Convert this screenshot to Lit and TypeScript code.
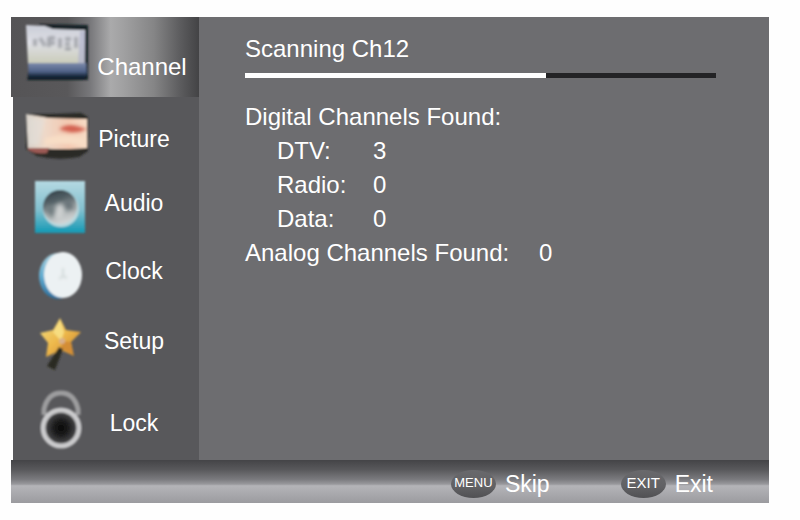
import { LitElement, html, css, svg } from "lit";
import { customElement, state } from "lit/decorators.js";
import { classMap } from "lit/directives/class-map.js";

const channelIcon = svg`
  <svg class="icon" width="78" height="80" viewBox="0 0 78 80" aria-hidden="true">
    <defs>
      <linearGradient id="ch-screen" x1="0" y1="0" x2="0" y2="1">
        <stop offset="0" stop-color="#c9ccd6" />
        <stop offset=".45" stop-color="#dfe0e6" />
        <stop offset="1" stop-color="#c9cbb8" />
      </linearGradient>
      <linearGradient id="ch-base" x1="0" y1="0" x2="0" y2="1">
        <stop offset="0" stop-color="#7d8bab" />
        <stop offset=".5" stop-color="#4f6288" />
        <stop offset=".75" stop-color="#1c2c40" />
        <stop offset="1" stop-color="#0a151d" />
      </linearGradient>
      <filter id="ch-soft"><feGaussianBlur stdDeviation="0.9" /></filter>
      <filter id="ch-blur"><feGaussianBlur stdDeviation="1.2" /></filter>
    </defs>
    <g filter="url(#ch-soft)">
      <path d="M28 7L77 8V63H16z" fill="#192027" />
      <path d="M15 8L34 9L42 12L74 13L73 47H17z" fill="url(#ch-screen)" />
      <path d="M17 46H75L76 58L72 63H18z" fill="url(#ch-base)" />
      <path d="M69 14H74V46H67z" fill="#b4b6cc" opacity=".8" />
      <path d="M24 22V29M29 21L34 29M38 20V30M38 21H44M44 26H38M49 21V31M54 22H60M54 27H59M54 32H60M65 20V31"
        stroke="#8f9298" stroke-width="4" fill="none" opacity=".7" filter="url(#ch-blur)" />
    </g>
  </svg>`;

const pictureIcon = svg`
  <svg class="icon" width="78" height="72" viewBox="0 0 78 72" aria-hidden="true">
    <defs>
      <linearGradient id="pi-face" x1="0" y1="0" x2="1" y2="0">
        <stop offset="0" stop-color="#d3cdc6" />
        <stop offset=".3" stop-color="#eed9c9" />
        <stop offset=".7" stop-color="#f3c8b0" />
        <stop offset="1" stop-color="#f8dcc6" />
      </linearGradient>
      <filter id="pi-soft"><feGaussianBlur stdDeviation="0.9" /></filter>
      <filter id="pi-blur"><feGaussianBlur stdDeviation="1.5" /></filter>
    </defs>
    <g filter="url(#pi-soft)">
      <path d="M15 17L40 17L70 16L77 20V54L68 60Q46 64 26 59L15 52z" fill="#292a25" />
      <path d="M15 17L38 21L76 22V51Q56 53 17 51z" fill="url(#pi-face)" />
      <path d="M48 32Q56 26 66 29L76 32Q66 37 58 35Q52 34 48 32z" fill="#d3604f" filter="url(#pi-blur)" />
      <path d="M34 42Q52 34 75 42V49Q54 45 34 48z" fill="#f8dec6" filter="url(#pi-blur)" />
      <path d="M17 51H38L36 56Q26 58 17 53z" fill="#9c5a54" />
      <path d="M17 20L34 22L28 48H18z" fill="#e4e1dc" opacity=".6" filter="url(#pi-blur)" />
    </g>
  </svg>`;

const audioIcon = svg`
  <svg class="icon" width="78" height="64" viewBox="0 0 78 64" aria-hidden="true">
    <defs>
      <linearGradient id="au-box" x1="0" y1="0" x2="0" y2="1">
        <stop offset="0" stop-color="#b5d9e2" />
        <stop offset=".55" stop-color="#83c0cf" />
        <stop offset="1" stop-color="#1399b4" />
      </linearGradient>
      <linearGradient id="au-cone" x1=".3" y1="0" x2=".6" y2="1">
        <stop offset="0" stop-color="#34434b" />
        <stop offset=".35" stop-color="#59656a" />
        <stop offset=".6" stop-color="#a9afb0" />
        <stop offset="1" stop-color="#d5d8d8" />
      </linearGradient>
      <filter id="au-soft"><feGaussianBlur stdDeviation="0.8" /></filter>
      <filter id="au-blur" x="-50%" y="-50%" width="200%" height="200%"><feGaussianBlur stdDeviation="2" /></filter>
    </defs>
    <g filter="url(#au-soft)">
      <rect x="24" y="12" width="50" height="52" fill="url(#au-box)" />
      <circle cx="50" cy="40" r="18" fill="#b9d8de" />
      <circle cx="49" cy="38" r="17" fill="url(#au-cone)" />
      <path d="M34 36L48 38L42 49Q35 45 34 36z" fill="#707b7f" filter="url(#au-blur)" />
      <path d="M49 36L59 28L64 40L54 42z" fill="#6a7579" filter="url(#au-blur)" />
      <path d="M45 37L50 34L54 40L50 50L44 50z" fill="#cfd2d2" filter="url(#au-blur)" />
    </g>
  </svg>`;

const clockIcon = svg`
  <svg class="icon" width="78" height="68" viewBox="0 0 78 68" aria-hidden="true">
    <defs>
      <linearGradient id="cl-side" x1="0" y1="0" x2="0" y2="1">
        <stop offset="0" stop-color="#a9cfdc" />
        <stop offset=".5" stop-color="#62acd0" />
        <stop offset="1" stop-color="#2b6f9f" />
      </linearGradient>
      <filter id="cl-soft"><feGaussianBlur stdDeviation="0.9" /></filter>
      <filter id="cl-blur"><feGaussianBlur stdDeviation="1" /></filter>
    </defs>
    <g filter="url(#cl-soft)">
      <ellipse cx="47" cy="43" rx="19" ry="23" fill="url(#cl-side)" />
      <ellipse cx="52" cy="42" rx="19" ry="23" fill="#ecf1f3" />
      <path d="M52 35V43L48 46M52 43L56 45" stroke="#d3dada" stroke-width="2" fill="none" filter="url(#cl-blur)" />
    </g>
  </svg>`;

const setupIcon = svg`
  <svg class="icon" width="78" height="70" viewBox="0 0 78 70" aria-hidden="true">
    <defs>
      <linearGradient id="st-star" x1="0" y1="0" x2="1" y2="1">
        <stop offset="0" stop-color="#f3df83" />
        <stop offset=".5" stop-color="#edb84b" />
        <stop offset="1" stop-color="#c77f2b" />
      </linearGradient>
      <filter id="st-soft"><feGaussianBlur stdDeviation="0.9" /></filter>
    </defs>
    <g filter="url(#st-soft)">
      <path d="M49 17L55 29L70 31L60 41L63 55L50 49L35 56L37 42L29 32L42 29z" fill="url(#st-star)" />
      <path d="M49 19L53 31L50 40L42 31z" fill="#f7dd80" />
      <path d="M50 40L60 41L62 53L51 48z" fill="#d38d36" />
      <circle cx="51" cy="40" r="3" fill="#d9b089" />
      <path d="M48 46L52 48L44 69L36 65z" fill="#292a24" />
    </g>
  </svg>`;

const lockIcon = svg`
  <svg class="icon" width="78" height="82" viewBox="0 0 78 82" aria-hidden="true">
    <defs>
      <radialGradient id="lo-dial">
        <stop offset="0" stop-color="#080808" />
        <stop offset=".4" stop-color="#1c1c1d" />
        <stop offset="1" stop-color="#555557" />
      </radialGradient>
      <filter id="lo-soft"><feGaussianBlur stdDeviation="0.9" /></filter>
    </defs>
    <g filter="url(#lo-soft)">
      <path d="M33 44V38Q37 22 50 22Q63 22 67 38V44" fill="none" stroke="#9c9c9e" stroke-width="5" />
      <circle cx="50" cy="57" r="18" fill="url(#lo-dial)" stroke="#cacacc" stroke-width="5" />
    </g>
  </svg>`;

const MENU = [
  { id: "channel", label: "Channel", icon: channelIcon },
  { id: "picture", label: "Picture", icon: pictureIcon },
  { id: "audio", label: "Audio", icon: audioIcon },
  { id: "clock", label: "Clock", icon: clockIcon },
  { id: "setup", label: "Setup", icon: setupIcon },
  { id: "lock", label: "Lock", icon: lockIcon },
];

@customElement("app-root")
export class AppRoot extends LitElement {
  @state() private active = "channel";
  @state() private progress = 64;

  static styles = css`
    :host {
      display: block;
      box-sizing: border-box;
      min-height: 100vh;
      padding: 17px 31px 17px 11px;
      background: #fefefe;
      color: #fff;
      font-family: "Liberation Sans", Arial, sans-serif;
      font-size: 24px;
      line-height: 34px;
    }
    button {
      border: 0;
      margin: 0;
      padding: 0;
      background: none;
      color: inherit;
      font: inherit;
      cursor: pointer;
    }
    .body {
      display: grid;
      grid-template-columns: 188px 1fr;
    }
    .sidebar {
      display: flex;
      flex-direction: column;
      padding-bottom: 7px;
      background: linear-gradient(90deg, #fefefe 2px, #58585b 2px);
    }
    .item {
      display: flex;
      align-items: flex-end;
      font-size: 23px;
      line-height: 28px;
    }
    .item.active {
      font-size: 24px;
      background: linear-gradient(90deg, #555456 0, #59585a 30%, #77777a 42%, #aaaaab 53%, #a0a0a1 60%, #858586 76%, #5c5c5e 90%, #434345 100%);
    }
    .icon {
      display: block;
      flex: none;
      overflow: visible;
    }
    .label {
      flex: 1;
      padding: 0 20px 16px 0;
      text-align: center;
    }
    .item.active .label {
      padding-right: 4px;
    }
    .panel {
      padding: 15px 53px 15px 46px;
      background: #6d6d70;
    }
    h1 {
      margin: 0;
      font: inherit;
    }
    .track {
      height: 5px;
      margin: 7px 0 22px;
      background: #232325;
    }
    .fill {
      height: 100%;
      background: #fff;
    }
    p,
    dl,
    dd {
      margin: 0;
    }
    .row {
      display: flex;
    }
    .counts {
      padding-left: 32px;
    }
    .counts dt {
      width: 96px;
    }
    .total dt {
      width: 294px;
    }
    .footer {
      display: flex;
      justify-content: flex-end;
      align-items: center;
      gap: 71px;
      height: 43px;
      box-sizing: border-box;
      padding: 4px 56px 0 0;
      background: linear-gradient(#444447 0, #58585b 22%, #7a7a7e 45%, #98989c 56%, #b4b4b8 60%, #a8a8ac 80%, #9b9b9f 100%);
    }
    .action {
      display: flex;
      align-items: center;
      gap: 9px;
      font-size: 23px;
      line-height: 28px;
    }
    .key {
      width: 45px;
      height: 28px;
      border-radius: 50%;
      background: linear-gradient(#69696c, #616164 60%, #505053);
      font-family: inherit;
      font-size: 13px;
      line-height: 26px;
      text-align: center;
    }
    .key.large {
      font-size: 15px;
    }
  `;

  render() {
    return html`
      <div class="body">
        <nav class="sidebar" aria-label="Settings">
          ${MENU.map(
            (m) => html`
              <button
                class=${classMap({ item: true, active: m.id === this.active })}
                @click=${() => (this.active = m.id)}
              >
                ${m.icon}<span class="label">${m.label}</span>
              </button>
            `
          )}
        </nav>
        <main class="panel">
          <h1>Scanning Ch12</h1>
          <div
            class="track"
            role="progressbar"
            aria-label="Scan progress"
            aria-valuemin="0"
            aria-valuemax="100"
            aria-valuenow=${this.progress}
          >
            <div class="fill" style="width:${this.progress}%"></div>
          </div>
          <p>Digital Channels Found:</p>
          <dl class="counts">
            <div class="row"><dt>DTV:</dt><dd>3</dd></div>
            <div class="row"><dt>Radio:</dt><dd>0</dd></div>
            <div class="row"><dt>Data:</dt><dd>0</dd></div>
          </dl>
          <dl class="total">
            <div class="row"><dt>Analog Channels Found:</dt><dd>0</dd></div>
          </dl>
        </main>
      </div>
      <footer class="footer">
        <button class="action"><kbd class="key">MENU</kbd><span>Skip</span></button>
        <button class="action"><kbd class="key large">EXIT</kbd><span>Exit</span></button>
      </footer>
    `;
  }
}
